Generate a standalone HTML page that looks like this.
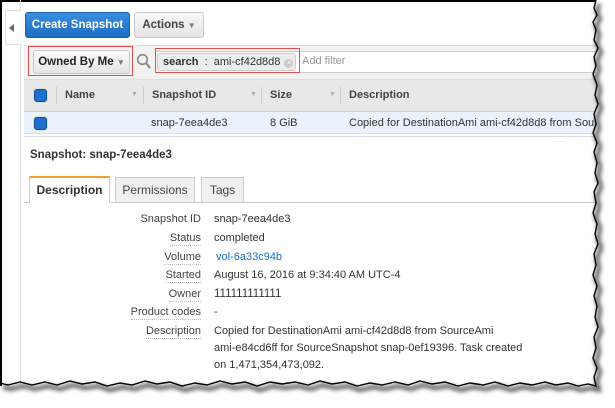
<!DOCTYPE html>
<html><head><meta charset="utf-8"><style>
*{box-sizing:border-box;margin:0;padding:0}
body{width:615px;height:408px;background:#fff;position:relative;overflow:hidden;font-family:"Liberation Sans",Arial,sans-serif;font-size:11px;color:#333}
.a{position:absolute}
.btn{position:absolute;border-radius:3px;font-weight:bold;font-size:11.5px;text-align:center}
.dd{font-size:8px;color:#777}
.cb{position:absolute;width:13px;height:13px;background:#1e6fd0;border:1px solid #0d4fa0;border-radius:3px;box-shadow:0 0 0 1px #ddd}
.lbl{position:absolute;right:414px;text-align:right;color:#444;border-bottom:1px dotted #bbb;padding-bottom:1px}
.val{position:absolute;left:214px;color:#333}
</style></head><body>
<div class="a" style="left:0;top:0;width:596px;height:386px;border-left:2px solid #000;border-top:2px solid #000"></div>
<div class="a" style="left:5px;top:10px;width:16px;height:35px;border:1px solid #ddd;border-right:none;background:#fff"></div>
<div class="a" style="left:9px;top:24px;width:0;height:0;border-right:5px solid #666;border-top:4px solid transparent;border-bottom:4px solid transparent"></div>
<div class="a" style="left:20px;top:45px;width:1px;height:340px;background:#ddd"></div>
<div class="a" style="left:20px;top:0;width:1px;height:10px;background:#ddd"></div>

<div class="btn" style="left:25px;top:12px;width:105px;height:26px;background:linear-gradient(#3a8ee0,#1c6cc4);border:1px solid #1a5fae;color:#fff;line-height:24px">Create Snapshot</div>
<div class="btn" style="left:134px;top:12px;width:70px;height:26px;background:linear-gradient(#f8f8f8,#e4e4e4);border:1px solid #c8c8c8;color:#444;line-height:24px">Actions <span class="dd">&#9660;</span></div>

<div class="a" style="left:24px;top:45px;width:572px;height:35px;background:#f2f2f2;border-top:1px solid #ddd;border-bottom:1px solid #ddd"></div>
<div class="btn" style="left:33px;top:50px;width:97px;height:24px;background:linear-gradient(#fafafa,#e6e6e6);border:1px solid #c8c8c8;color:#222;line-height:22px">Owned By Me <span class="dd">&#9660;</span></div>
<div class="a" style="left:28px;top:46px;width:105px;height:30px;border:1px solid #e05050"></div>
<svg class="a" style="left:136px;top:53px" width="16" height="17"><circle cx="6.5" cy="6.5" r="4.8" fill="none" stroke="#888" stroke-width="1.6"/><line x1="10" y1="10" x2="14" y2="15" stroke="#888" stroke-width="2"/></svg>
<div class="a" style="left:155px;top:51px;width:441px;height:22px;background:#fff;border:1px solid #ccc;border-right:none"></div>
<div class="a" style="left:157px;top:53px;width:139px;height:18px;background:#ececec;border:1px solid #ccc;border-radius:3px;font-size:11px;line-height:16px;padding-left:5px;color:#333;white-space:nowrap"><b>search</b> &nbsp;:&nbsp; ami-cf42d8d8 <span style="display:inline-block;width:9px;height:9px;border-radius:50%;background:#ccc;color:#fff;font-size:7px;line-height:9px;text-align:center;vertical-align:0;margin-left:1px">×</span></div>
<div class="a" style="left:155px;top:48px;width:145px;height:25px;border:1px solid #e05050"></div>
<div class="a" style="left:302px;top:55px;color:#999;font-size:11px">Add filter</div>

<div class="a" style="left:24px;top:80px;width:572px;height:32px;background:#e8e8e8;border-bottom:1px solid #d0d0d0"></div>
<div class="cb" style="left:34px;top:89px"></div>
<div class="a" style="left:56px;top:87px;width:1px;height:17px;background:#ccc"></div>
<div class="a" style="left:65px;top:89px;font-weight:bold;color:#444">Name</div>
<div class="a dd" style="left:131px;top:91px;font-size:7px;color:#aaa">&#9660;</div>
<div class="a" style="left:143px;top:87px;width:1px;height:17px;background:#ccc"></div>
<div class="a" style="left:152px;top:89px;font-weight:bold;color:#444">Snapshot ID</div>
<div class="a dd" style="left:250px;top:91px;font-size:7px;color:#aaa">&#9660;</div>
<div class="a" style="left:261px;top:87px;width:1px;height:17px;background:#ccc"></div>
<div class="a" style="left:270px;top:89px;font-weight:bold;color:#444">Size</div>
<div class="a dd" style="left:329px;top:91px;font-size:7px;color:#aaa">&#9660;</div>
<div class="a" style="left:340px;top:87px;width:1px;height:17px;background:#ccc"></div>
<div class="a" style="left:349px;top:89px;font-weight:bold;color:#444">Description</div>
<div class="a" style="left:24px;top:112px;width:572px;height:22px;background:#eaf2fb;border-bottom:1px solid #d8e0ea"></div>
<div class="cb" style="left:34px;top:117px"></div>
<div class="a" style="left:151px;top:117px">snap-7eea4de3</div>
<div class="a" style="left:270px;top:117px">8 GiB</div>
<div class="a" style="left:349px;top:117px;white-space:nowrap;width:246px;overflow:hidden">Copied for DestinationAmi ami-cf42d8d8 from SourceAmi</div>
<div class="a" style="left:24px;top:136px;width:572px;height:1px;background:#ddd"></div>
<div class="a" style="left:553px;top:137px;color:#ccc;font-size:8px;letter-spacing:1px">&middot;&middot;&middot;</div>

<div class="a" style="left:30px;top:149px;font-weight:bold;font-size:11.5px;color:#333">Snapshot: snap-7eea4de3</div>
<div class="a" style="left:24px;top:202px;width:572px;height:1px;background:#ccc"></div>
<div class="a" style="left:29px;top:176px;width:81px;height:27px;background:#fff;border:1px solid #ccc;border-top:2px solid #f0a030;border-bottom:none;font-weight:bold;font-size:12px;text-align:center;line-height:24px;color:#333">Description</div>
<div class="a" style="left:115px;top:177px;width:80px;height:25px;background:#f0f0f0;border:1px solid #ccc;border-bottom:none;font-size:12px;text-align:center;line-height:24px;color:#444">Permissions</div>
<div class="a" style="left:201px;top:177px;width:43px;height:25px;background:#f0f0f0;border:1px solid #ccc;border-bottom:none;font-size:12px;text-align:center;line-height:24px;color:#444">Tags</div>

<div class="lbl" style="top:213px;border:none">Snapshot ID</div><div class="val" style="top:213px">snap-7eea4de3</div>
<div class="lbl" style="top:232px">Status</div><div class="val" style="top:232px">completed</div>
<div class="lbl" style="top:251px">Volume</div><div class="val" style="top:251px;left:216px;color:#1a6dc4">vol-6a33c94b</div>
<div class="lbl" style="top:269px">Started</div><div class="val" style="top:269px">August 16, 2016 at 9:34:40 AM UTC-4</div>
<div class="lbl" style="top:288px">Owner</div><div class="val" style="top:288px;font-size:11.5px">111111111111</div>
<div class="lbl" style="top:306px">Product codes</div><div class="val" style="top:306px">-</div>
<div class="lbl" style="top:325px">Description</div>
<div class="val" style="top:323px;line-height:17px">Copied for DestinationAmi ami-cf42d8d8 from SourceAmi<br>ami-e84cd6ff for SourceSnapshot snap-0ef19396. Task created<br>on 1,471,354,473,092.</div>

<svg class="a" style="left:0;top:0" width="615" height="408">
<defs><filter id="f"><feGaussianBlur stdDeviation="2"/></filter></defs>
<path id="e" d="M596,0 L594,8 L597,15 L593,22 L596,30 L594,40 L598,48 L594,57 L596,66 L593,74 L597,85 L595,95 L598,104 L594,114 L596,124 L593,133 L597,143 L594,152 L597,163 L595,173 L598,183 L594,192 L596,203 L593,213 L597,224 L595,234 L598,244 L594,254 L596,265 L593,275 L597,286 L594,296 L597,306 L595,317 L598,327 L594,337 L596,348 L593,358 L597,368 L594,377 L596,386 L588,384 L578,386 L568,383 L556,385 L545,382 L532,385 L520,383 L508,386 L495,382 L483,385 L470,383 L458,386 L445,382 L432,384 L420,381 L408,385 L395,382 L382,385 L370,383 L357,386 L345,382 L332,384 L320,381 L308,385 L295,382 L282,384 L270,382 L257,386 L245,382 L232,384 L220,381 L207,385 L195,383 L182,386 L170,382 L157,384 L145,381 L132,385 L120,383 L107,386 L95,382 L82,384 L70,381 L57,385 L45,382 L32,385 L20,382 L8,385 L0,383" fill="none"/>
<use href="#e" stroke="#555" stroke-width="4" transform="translate(3,4)" filter="url(#f)"/>
<use href="#e" stroke="#000" stroke-width="1.4"/>
</svg>
</body></html>
